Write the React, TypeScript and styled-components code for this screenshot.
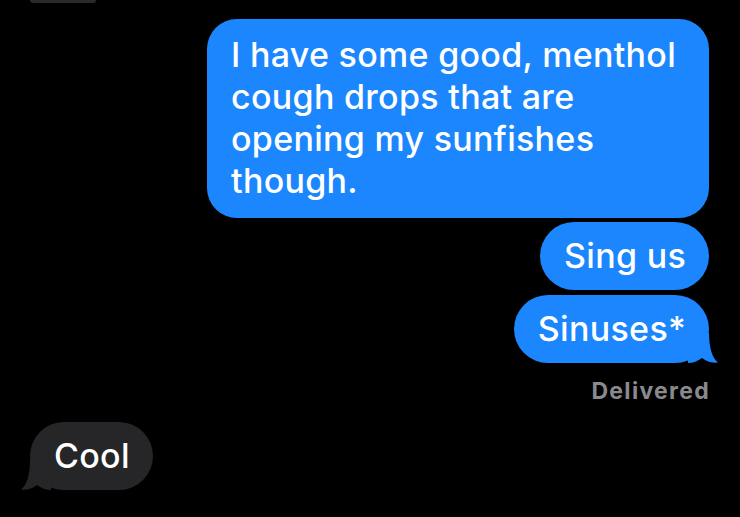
import React from "react";
import styled, { createGlobalStyle } from "styled-components";

const GlobalStyle = createGlobalStyle`
  html, body {
    margin: 0;
    padding: 0;
    background: #000;
  }
  body {
    font-family: Inter, "Noto Sans", "Liberation Sans", sans-serif;
    -webkit-font-smoothing: antialiased;
  }
`;

type Msg = { text: string; tail?: boolean; wide?: boolean; gap: number };

const sent: Msg[] = [
  {
    text: "I have some good, menthol cough drops that are opening my sunfishes though.",
    wide: true,
    gap: 16,
  },
  { text: "Sing us", gap: 4 },
  { text: "Sinuses*", tail: true, gap: 5 },
];

function Tail({ side, color }: { side: "left" | "right"; color: string }) {
  return (
    <TailSvg $side={side} width="30" height="30" viewBox="0 0 30 30">
      <path
        d="M0 30 L0 0 L21 0 C21 14 24 25 30 29.6 C25 30 19 29 14 25 C10 28 5 30 0 30 Z"
        fill={color}
      />
    </TailSvg>
  );
}

function App() {
  return (
    <>
      <GlobalStyle />
      <Screen>
        <Stub />
        {sent.map((m) => (
          <Row key={m.text} $align="right" $gap={m.gap}>
            <Bubble $kind="sent" $wide={m.wide}>
              {m.text}
              {m.tail && <Tail side="right" color="#1b86fd" />}
            </Bubble>
          </Row>
        ))}
        <Status>Delivered</Status>
        <Row $align="left" $gap={18}>
          <Bubble $kind="received">
            Cool
            <Tail side="left" color="#262628" />
          </Bubble>
        </Row>
      </Screen>
    </>
  );
}

export default App;

const Screen = styled.div`
  width: 740px;
  height: 517px;
  overflow: hidden;
  box-sizing: border-box;
  padding: 0 31px 0 30px;
  display: flex;
  flex-direction: column;
`;

const Stub = styled.div`
  width: 66px;
  height: 3px;
  background: #3a3a3c;
  border-radius: 0 0 14px 14px;
  opacity: 0.7;
`;

const Row = styled.div<{ $align: "left" | "right"; $gap: number }>`
  display: flex;
  justify-content: ${(p) => (p.$align === "right" ? "flex-end" : "flex-start")};
  margin-top: ${(p) => p.$gap}px;
`;

const Bubble = styled.div<{ $kind: "sent" | "received"; $wide?: boolean }>`
  position: relative;
  box-sizing: border-box;
  width: ${(p) => (p.$wide ? "502px" : "auto")};
  padding: ${(p) => (p.$wide ? "15px 24px 16px" : "13px 23px 13px 24px")};
  border-radius: ${(p) => (p.$wide ? "30px" : "34px")};
  background: ${(p) => (p.$kind === "sent" ? "#1b86fd" : "#262628")};
  color: #fff;
  font-size: 34px;
  line-height: 42px;
  font-weight: 500;
  letter-spacing: 0.3px;
`;

const TailSvg = styled.svg<{ $side: "left" | "right" }>`
  position: absolute;
  bottom: 0;
  ${(p) => (p.$side === "right" ? "right: -9px;" : "left: -9px; transform: scaleX(-1);")}
`;

const Status = styled.div`
  margin-top: 15px;
  margin-right: -1px;
  text-align: right;
  color: #8a8a8e;
  font-size: 23px;
  line-height: 26px;
  font-weight: 700;
  letter-spacing: 1.3px;
`;
